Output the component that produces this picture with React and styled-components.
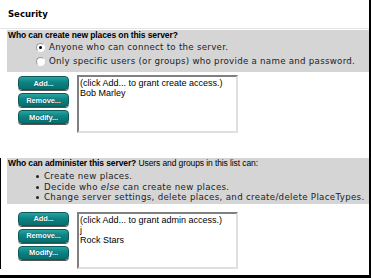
import styled, { createGlobalStyle } from "styled-components";

const GlobalStyle = createGlobalStyle`
  html, body { margin: 0; padding: 0; background: #fff; }
  body { width: 371px; height: 278px; overflow: hidden; }
`;

//Outer
const Frame = styled.div`
  box-sizing: border-box;
  width: 371px;
  height: 278px;
  border-right: 2px solid #000;
  border-bottom: 3px solid #000;
  background: #fff;
  font-family: "Liberation Sans", Arial, sans-serif;
  color: #000;
`;

const Title = styled.div`
  font-family: "DejaVu Sans", Verdana, sans-serif;
  font-weight: bold;
  font-size: 8.5px;
  padding: 9px 0 0 8px;
  height: 19px;
  border-bottom: 1px solid #e4e4e4;
`;

const Section = styled.div`
  margin-top: ${(p) => p.top}px;
  border-left: ${(p) => (p.edge ? "1px solid #000" : "1px solid transparent")};
`;

const Band = styled.div`
  margin-left: 6px;
  background: #d5d5d5;
  padding: 1px 0 ${(p) => p.bottom}px 1px;
`;

const Question = styled.div`
  font-size: 8.5px;
  line-height: 9px;
  letter-spacing: -0.1px;
  white-space: nowrap;
  b { font-weight: bold; }
`;

const RadioRow = styled.label`
  display: flex;
  align-items: center;
  gap: 2px;
  padding-left: 28px;
  height: 14px;
  font-family: "DejaVu Sans", Verdana, sans-serif;
  font-size: 8.7px;
  letter-spacing: 0.25px;
  color: #222;
  white-space: nowrap;
`;

const Radio = styled.span`
  box-sizing: border-box;
  width: 9px;
  height: 9px;
  border-radius: 50%;
  border: 1px solid #999;
  border-right-color: #fff;
  border-bottom-color: #fff;
  background: #fff;
  display: flex;
  align-items: center;
  justify-content: center;
  margin-right: 2px;
  &::after {
    content: "";
    width: 3px;
    height: 3px;
    border-radius: 50%;
    background: ${(p) => (p.checked ? "#000" : "transparent")};
  }
`;

const Bullets = styled.ul`
  margin: 3px 0 0;
  padding: 0 0 0 28px;
  list-style: none;
  font-family: "DejaVu Sans", Verdana, sans-serif;
  font-size: 8.7px;
  letter-spacing: 0.3px;
  color: #222;
  li {
    position: relative;
    padding-left: 8px;
    line-height: 10.5px;
    white-space: nowrap;
  }
  li::before {
    content: "";
    position: absolute;
    left: 0;
    top: 4px;
    width: 3px;
    height: 3px;
    border-radius: 50%;
    background: #222;
  }
`;

const Access = styled.div`
  display: flex;
  gap: 8px;
  padding: ${(p) => p.pad}px 0 0 17px;
`;

const Buttons = styled.div`
  display: flex;
  flex-direction: column;
  gap: 3px;
  padding-top: ${(p) => p.top}px;
`;

const Button = styled.button`
  width: 51px;
  height: 14px;
  padding: 0;
  border: 1px solid #0a5a5a;
  border-radius: 4px;
  background: linear-gradient(#2aa3a3, #0d8383 45%, #086e6e);
  color: #fff;
  font-family: "Liberation Sans", Arial, sans-serif;
  font-size: 7.5px;
  font-weight: bold;
  letter-spacing: -0.1px;
  text-shadow: 0 0 1px #034;
  box-shadow: 0 1px 0 #555;
`;

const ListBox = styled.div`
  box-sizing: border-box;
  width: 161px;
  height: ${(p) => p.h}px;
  border: 2px solid;
  border-color: #808080 #e0e0e0 #e0e0e0 #808080;
  background: #fff;
  padding: 1px 1px;
  font-size: 9px;
  line-height: 10px;
  letter-spacing: 0;
`;

const Item = styled.div`
  white-space: nowrap;
`;

const App = () => {
  return (
    <>
      <GlobalStyle />
      <Frame>
        <Title>Security</Title>
        <Section top={1}>
          <Band bottom={4}>
            <Question>
              <b>Who can create new places on this server?</b>
            </Question>
            <RadioRow>
              <Radio checked />
              Anyone who can connect to the server.
            </RadioRow>
            <RadioRow>
              <Radio />
              Only specific users (or groups) who provide a name and password.
            </RadioRow>
          </Band>
          <Access pad={3}>
            <Buttons top={1}>
              <Button>Add...</Button>
              <Button>Remove...</Button>
              <Button>Modify...</Button>
            </Buttons>
            <ListBox h={58}>
              <Item>(click Add... to grant create access.)</Item>
              <Item>Bob Marley</Item>
            </ListBox>
          </Access>
        </Section>
        <Section top={25} edge>
          <Band bottom={1}>
            <Question>
              <b>Who can administer this server?</b> Users and groups in this list can:
            </Question>
            <Bullets>
              <li>Create new places.</li>
              <li>
                Decide who <i>else</i> can create new places.
              </li>
              <li>Change server settings, delete places, and create/delete PlaceTypes.</li>
            </Bullets>
          </Band>
          <Access pad={8}>
            <Buttons top={0}>
              <Button>Add...</Button>
              <Button>Remove...</Button>
              <Button>Modify...</Button>
            </Buttons>
            <ListBox h={57}>
              <Item>(click Add... to grant admin access.)</Item>
              <Item>j</Item>
              <Item>Rock Stars</Item>
            </ListBox>
          </Access>
        </Section>
      </Frame>
    </>
  );
};

export default App;
